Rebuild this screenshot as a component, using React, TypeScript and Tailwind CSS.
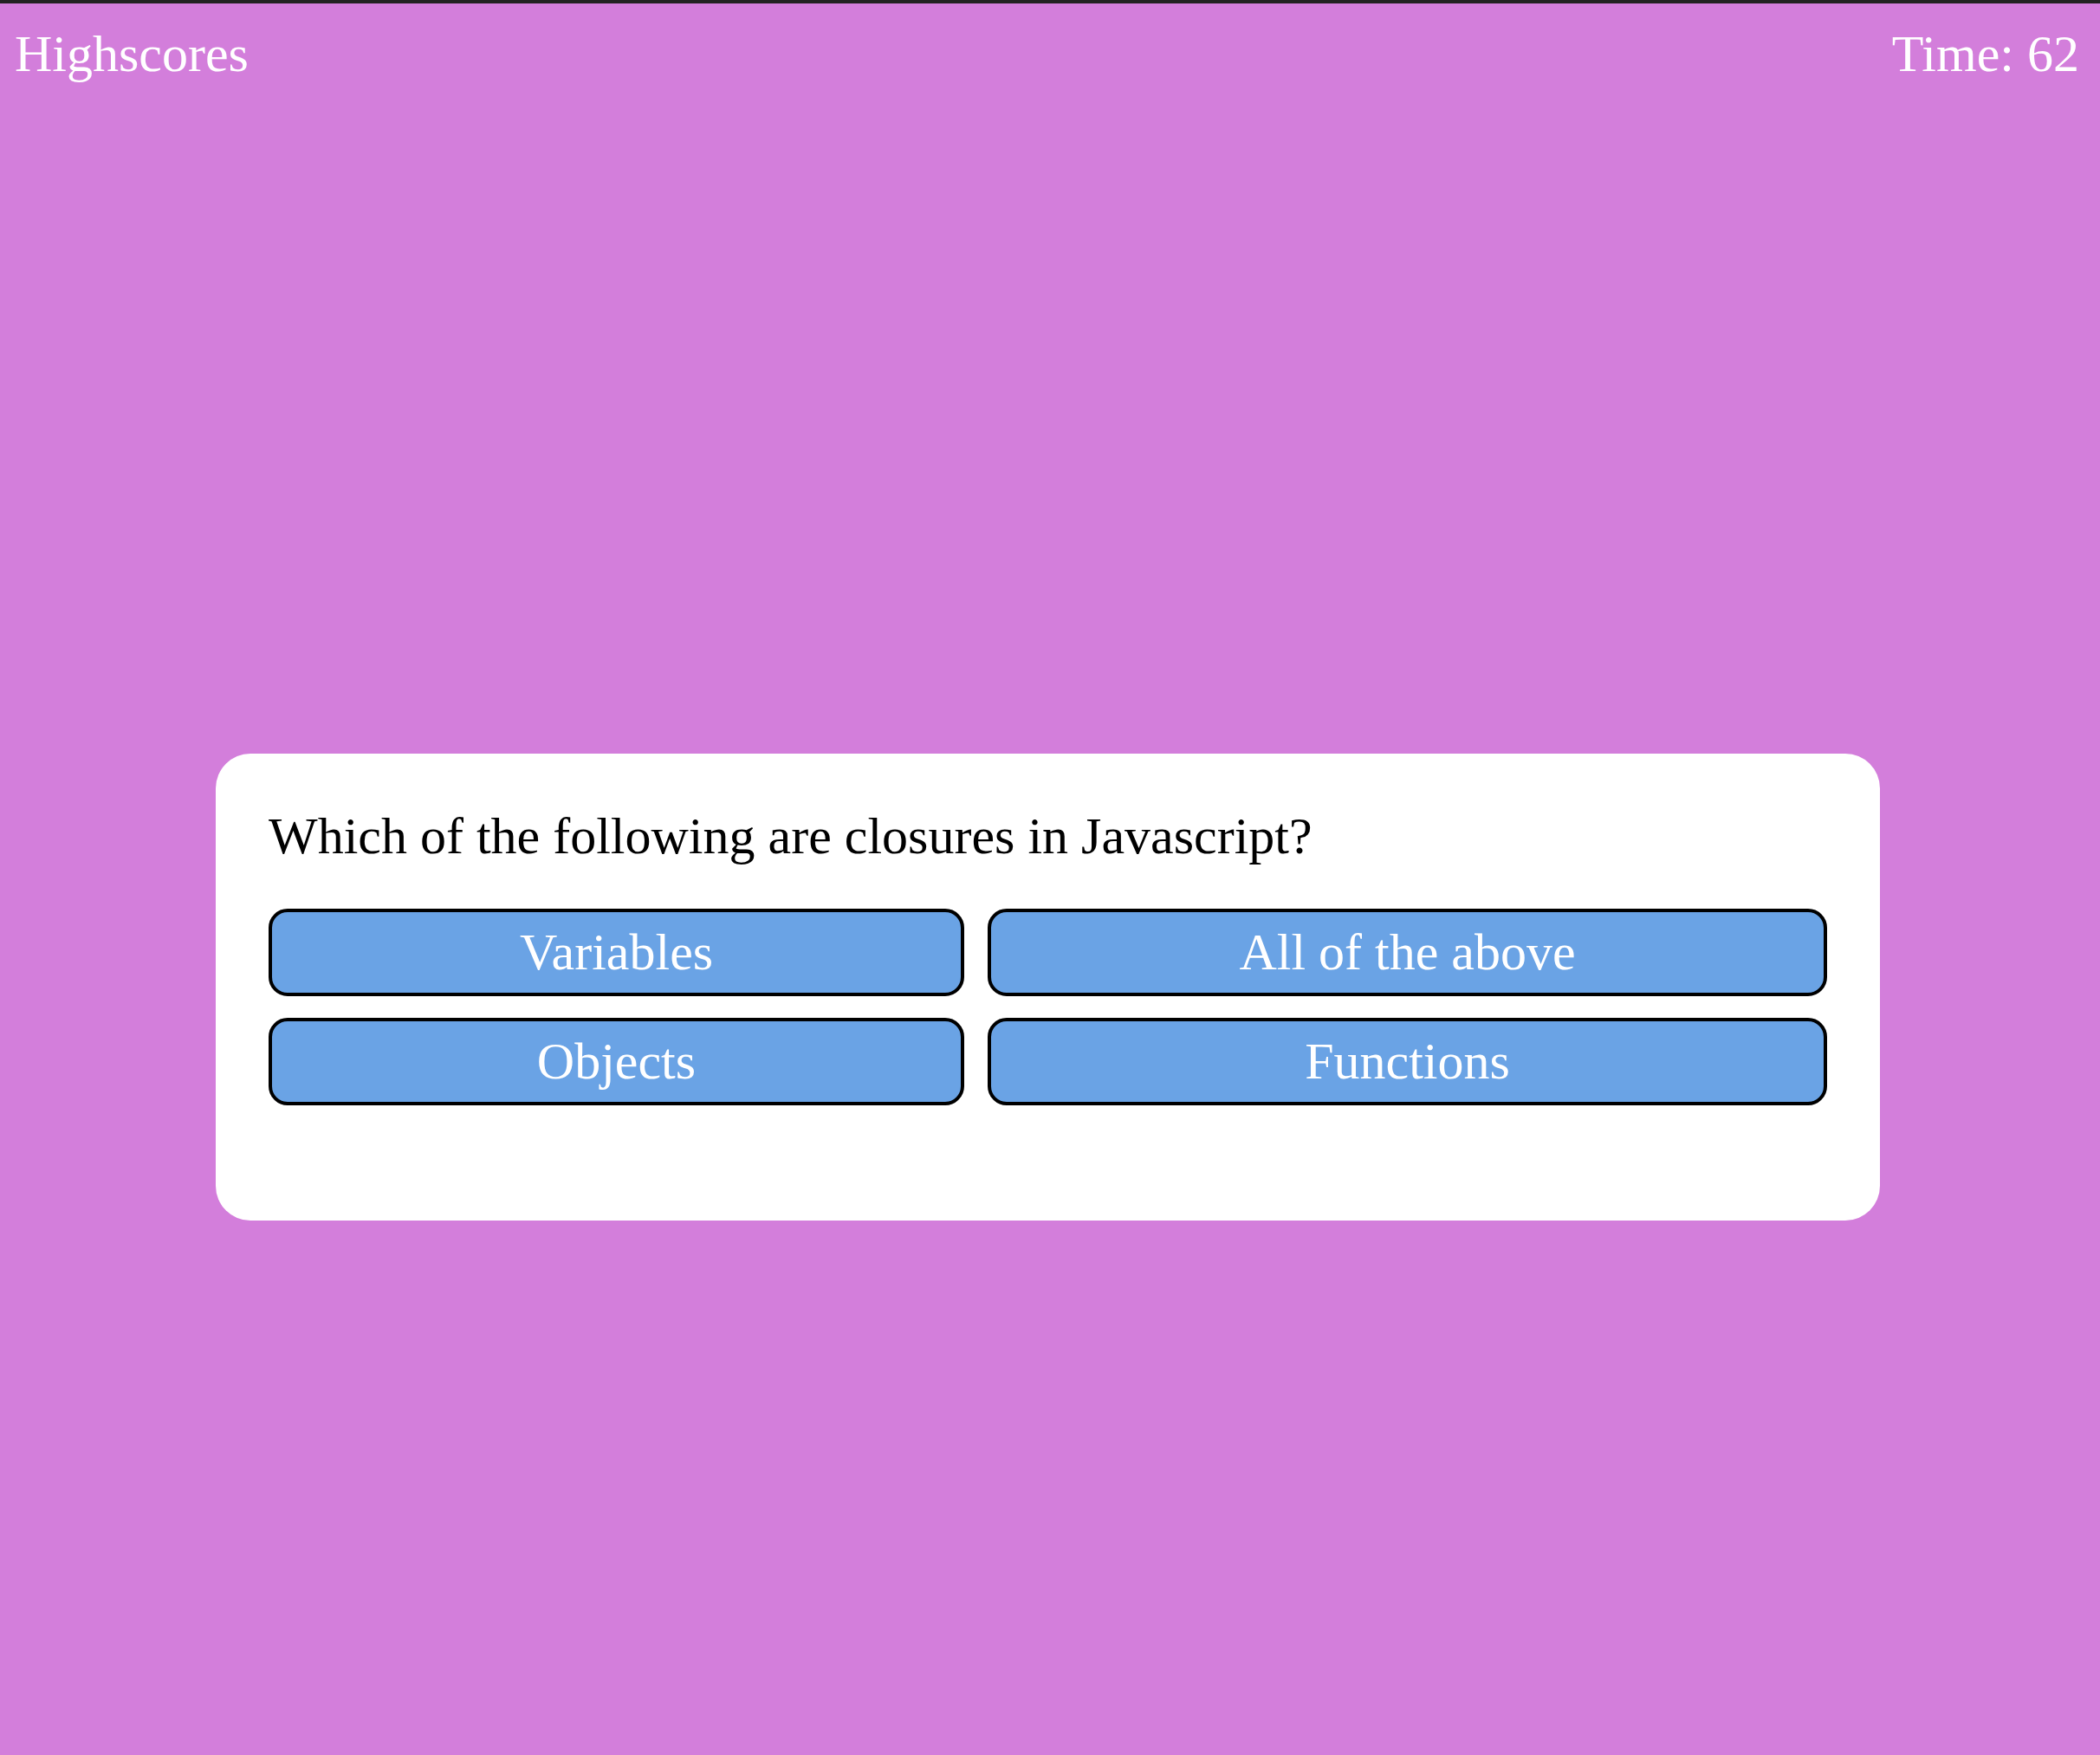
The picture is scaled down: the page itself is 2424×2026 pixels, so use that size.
const answers = ["Variables", "All of the above", "Objects", "Functions"];

export default function App() {
  return (
    <main
      className="min-h-[2026px] bg-[#d37edb] border-t-4 border-[#222222] text-white"
      style={{ fontFamily: '"Liberation Serif", "Times New Roman", serif' }}
    >
      <header className="flex justify-between items-start pl-[17px] pr-[24px] pt-[24px] text-[60px] leading-[1.15]">
        <a className="cursor-pointer">Highscores</a>
        <span>Time: 62</span>
      </header>

      <div className="flex justify-center pt-[773px]">
        <section className="w-[1921px] ml-[-5px] bg-white rounded-[40px] px-[61px] pt-[61px] pb-[133px]">
          <h2 className="text-black text-[60px] leading-[1.15]">
            Which of the following are closures in Javascript?
          </h2>
          <div className="grid grid-cols-[803px_969px] gap-x-[27px] gap-y-[25px] mt-[49px]">
            {answers.map((a) => (
              <button
                key={a}
                className="h-[101px] bg-[#6aa3e5] border-4 border-black rounded-[22px] text-white text-[60px] leading-[1.15] cursor-pointer"
              >
                {a}
              </button>
            ))}
          </div>
        </section>
      </div>
    </main>
  );
}
